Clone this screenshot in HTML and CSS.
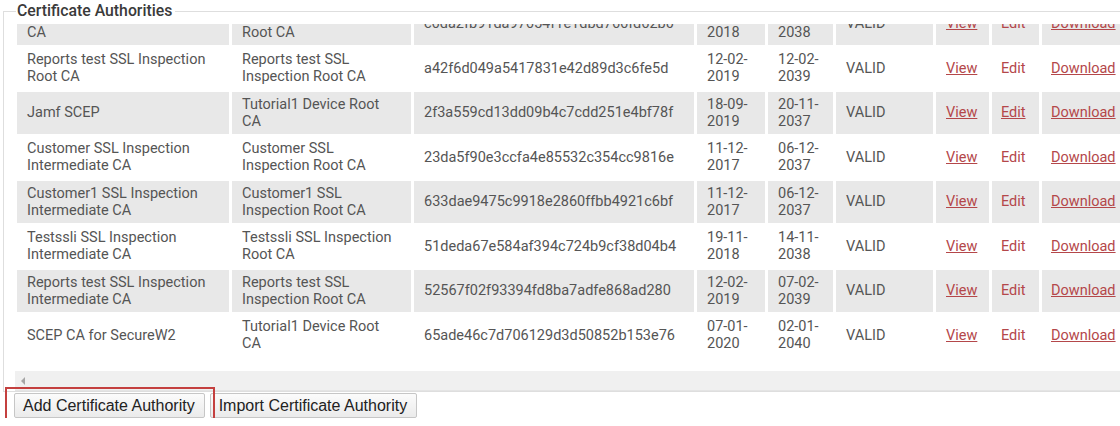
FILE: index.html
```html
<!DOCTYPE html>
<html lang="en">
<head>
    <meta charset="UTF-8">
    <meta name="viewport" content="width=device-width, initial-scale=1.0">
    <title>Certificate Authorities</title>
    <link rel="stylesheet" href="styles.css">
</head>
<body>

    <fieldset class="panel">
        <legend class="panel-title">Certificate Authorities</legend>

        <div class="scroll-view">
            <table class="ca-table">
                <colgroup>
                    <col class="c-name">
                    <col class="c-issuer">
                    <col class="c-serial">
                    <col class="c-date">
                    <col class="c-date2">
                    <col class="c-status">
                    <col class="c-view">
                    <col class="c-edit">
                    <col class="c-dl">
                </colgroup>
                <tbody>
                    <tr>
                        <td>Testssli SSL Inspection Root CA</td>
                        <td>Testssli SSL Inspection Root CA</td>
                        <td>c6da2fb91da97654f1e1dbd766fd62b0</td>
                        <td>19-11-2018</td>
                        <td>14-11-2038</td>
                        <td>VALID</td>
                        <td><a href="#">View</a></td>
                        <td><a href="#" class="plain">Edit</a></td>
                        <td><a href="#">Download</a></td>
                    </tr>
                    <tr>
                        <td>Reports test SSL Inspection Root CA</td>
                        <td>Reports test SSL Inspection Root CA</td>
                        <td>a42f6d049a5417831e42d89d3c6fe5d</td>
                        <td>12-02-2019</td>
                        <td>12-02-2039</td>
                        <td>VALID</td>
                        <td><a href="#">View</a></td>
                        <td><a href="#" class="plain">Edit</a></td>
                        <td><a href="#">Download</a></td>
                    </tr>
                    <tr>
                        <td>Jamf SCEP</td>
                        <td>Tutorial1 Device Root CA</td>
                        <td>2f3a559cd13dd09b4c7cdd251e4bf78f</td>
                        <td>18-09-2019</td>
                        <td>20-11-2037</td>
                        <td>VALID</td>
                        <td><a href="#">View</a></td>
                        <td><a href="#">Edit</a></td>
                        <td><a href="#">Download</a></td>
                    </tr>
                    <tr>
                        <td>Customer SSL Inspection Intermediate CA</td>
                        <td>Customer SSL Inspection Root CA</td>
                        <td>23da5f90e3ccfa4e85532c354cc9816e</td>
                        <td>11-12-2017</td>
                        <td>06-12-2037</td>
                        <td>VALID</td>
                        <td><a href="#">View</a></td>
                        <td><a href="#" class="plain">Edit</a></td>
                        <td><a href="#">Download</a></td>
                    </tr>
                    <tr>
                        <td>Customer1 SSL Inspection Intermediate CA</td>
                        <td>Customer1 SSL Inspection Root CA</td>
                        <td>633dae9475c9918e2860ffbb4921c6bf</td>
                        <td>11-12-2017</td>
                        <td>06-12-2037</td>
                        <td>VALID</td>
                        <td><a href="#">View</a></td>
                        <td><a href="#" class="plain">Edit</a></td>
                        <td><a href="#">Download</a></td>
                    </tr>
                    <tr>
                        <td>Testssli SSL Inspection Intermediate CA</td>
                        <td>Testssli SSL Inspection Root CA</td>
                        <td>51deda67e584af394c724b9cf38d04b4</td>
                        <td>19-11-2018</td>
                        <td>14-11-2038</td>
                        <td>VALID</td>
                        <td><a href="#">View</a></td>
                        <td><a href="#" class="plain">Edit</a></td>
                        <td><a href="#">Download</a></td>
                    </tr>
                    <tr>
                        <td>Reports test SSL Inspection Intermediate CA</td>
                        <td>Reports test SSL Inspection Root CA</td>
                        <td>52567f02f93394fd8ba7adfe868ad280</td>
                        <td>12-02-2019</td>
                        <td>07-02-2039</td>
                        <td>VALID</td>
                        <td><a href="#">View</a></td>
                        <td><a href="#" class="plain">Edit</a></td>
                        <td><a href="#">Download</a></td>
                    </tr>
                    <tr>
                        <td>SCEP CA for SecureW2</td>
                        <td>Tutorial1 Device Root CA</td>
                        <td>65ade46c7d706129d3d50852b153e76</td>
                        <td>07-01-2020</td>
                        <td>02-01-2040</td>
                        <td>VALID</td>
                        <td><a href="#">View</a></td>
                        <td><a href="#" class="plain">Edit</a></td>
                        <td><a href="#">Download</a></td>
                    </tr>
                </tbody>
            </table>
        </div>

        <div class="hscroll"><span class="hscroll-arrow"></span></div>
    </fieldset>

    <div class="actions">
        <span class="marked"><button class="btn">Add Certificate Authority</button></span>
        <button class="btn">Import Certificate Authority</button>
    </div>

</body>
</html>
```

FILE: styles.css
```css
body {
    margin: 0;
    background-color: #fff;
    font-family: Roboto, 'Liberation Sans', sans-serif;
    overflow: hidden;
}

.panel {
    box-sizing: border-box;
    width: 1180px;
    min-width: 0;
    margin: 2px 0 0 3px;
    padding: 0 0 0 10px;
    border: 1px solid #dedede;
}

.panel-title {
    margin-left: 2px;
    padding: 0 3px 0 1px;
    font-size: 15.8px;
    font-weight: 500;
    line-height: 18px;
    color: #3a3a3a;
}

.scroll-view {
    height: 347px;
    margin-top: 4px;
    overflow: hidden;
}

.ca-table {
    table-layout: fixed;
    width: 1121px;
    margin-top: -23.5px;
    border-collapse: separate;
    border-spacing: 3px 2px;
    font-size: 14.5px;
    line-height: 17.25px;
    color: #555;
}

.c-name { width: 212px; }
.c-issuer { width: 179px; }
.c-serial { width: 280px; }
.c-date { width: 68px; }
.c-date2 { width: 65px; }
.c-status { width: 97px; }
.c-view { width: 53px; }
.c-edit { width: 47px; }
.c-dl { width: 90px; }

.ca-table td {
    box-sizing: border-box;
    height: 42.5px;
    padding: 4px 10px;
    vertical-align: middle;
    text-align: left;
}

.ca-table td:nth-child(2) {
    padding-right: 11px;
}

.ca-table td:nth-child(8),
.ca-table td:nth-child(9) {
    padding-left: 9px;
    padding-right: 0;
}

.ca-table tr:nth-child(odd) td {
    background-color: #e8e8e8;
}

.ca-table a {
    color: #b4474a;
    text-decoration: underline;
}

.ca-table a.plain {
    text-decoration: none;
}

.hscroll {
    height: 19px;
    margin-left: 1px;
    background-color: #f0f0f0;
    border-bottom: 1px solid #e4e4e4;
    display: flex;
    align-items: center;
}

.hscroll-arrow {
    width: 0;
    height: 0;
    margin-left: 6px;
    border-top: 4px solid transparent;
    border-bottom: 4px solid transparent;
    border-right: 4px solid #a6a6a6;
}

.actions {
    display: flex;
    align-items: flex-start;
    gap: 5px;
    margin: 1px 0 0 14px;
}

.marked {
    position: relative;
    display: flex;
}

.marked::after {
    content: '';
    position: absolute;
    left: -9px;
    right: -10px;
    top: -6px;
    bottom: -6px;
    border: 2px solid #c4403f;
    pointer-events: none;
}

.btn {
    box-sizing: border-box;
    height: 25px;
    padding: 0 9px 0 8px;
    font-family: 'Liberation Sans', Arial, sans-serif;
    font-size: 16px;
    color: #222;
    background: linear-gradient(#fbfbfb, #ebebeb);
    border: 1px solid #c6c6c6;
    border-radius: 2px;
    cursor: pointer;
}
```
